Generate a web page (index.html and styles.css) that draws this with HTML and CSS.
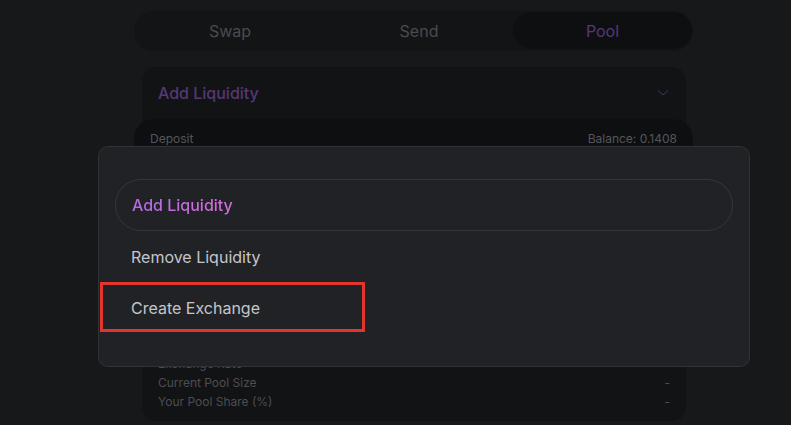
FILE: index.html
```html
<!DOCTYPE html>
<html lang="en">
<head>
<meta charset="utf-8">
<title>Pool</title>
<link rel="stylesheet" href="styles.css">
</head>
<body>
<div class="page">
  <div class="column">
    <nav class="tabs">
      <div class="tab">Swap</div>
      <div class="tab">Send</div>
      <div class="tab tab-active">Pool</div>
    </nav>
    <section class="card">
      <header class="card-head">
        <span class="card-title">Add Liquidity</span>
        <svg class="chevron" width="12" height="8" viewBox="0 0 12 8"><path d="M1 1.5 L6 6 L11 1.5" fill="none" stroke="currentColor" stroke-width="1"/></svg>
      </header>
      <div class="deposit">
        <div class="deposit-row">
          <span>Deposit</span>
          <span>Balance: 0.1408</span>
        </div>
      </div>
      <div class="stats">
        <div class="stat"><span>Exchange Rate</span><span>-</span></div>
        <div class="stat"><span>Current Pool Size</span><span>-</span></div>
        <div class="stat"><span>Your Pool Share (%)</span><span>-</span></div>
      </div>
    </section>
  </div>

  <div class="modal">
    <div class="option option-active"><span class="grad">Add Liquidity</span></div>
    <div class="option">Remove Liquidity</div>
    <div class="option">Create Exchange</div>
    <div class="highlight"></div>
  </div>
</div>
</body>
</html>
```
FILE: styles.css
```css
* { box-sizing: border-box; }
html, body { margin: 0; padding: 0; }
body {
  background: #17181a;
  font-family: Inter, "Noto Sans", sans-serif;
  width: 791px;
  height: 425px;
  overflow: hidden;
}
.page {
  position: relative;
  width: 791px;
  height: 425px;
}
.column {
  margin-left: 134px;
  width: 559px;
  padding-top: 11px;
  display: flex;
  flex-direction: column;
}
.tabs {
  display: grid;
  grid-template-columns: 190px 188px 1fr;
  height: 40px;
  background: #131416;
  border-radius: 20px;
  padding: 1px 1px 2px 1px;
}
.tab {
  display: flex;
  align-items: center;
  justify-content: center;
  font-size: 16px;
  color: #4a4b4f;
  border-radius: 19px;
}
.tab-active {
  background: #0e0f11;
  color: #553973;
}
.card {
  margin: 16px 7px 0 8px;
  background: #121315;
  border-radius: 14px;
  padding-bottom: 10px;
}
.card-head {
  height: 52px;
  display: flex;
  align-items: center;
  justify-content: space-between;
  padding: 0 17px 0 16px;
}
.card-title {
  font-size: 16px;
  font-weight: 500;
  color: #553875;
}
.chevron { color: #4a3262; }
.deposit {
  margin: 0 -7px 0 -8px;
  background: #0e0f11;
  border-radius: 20px;
  height: 228px;
  padding: 12px 16px;
}
.deposit-row {
  display: flex;
  justify-content: space-between;
  font-size: 12px;
  line-height: 16px;
  color: #55565b;
}
.stats {
  padding: 7px 16px 0 16px;
}
.stat {
  display: flex;
  justify-content: space-between;
  font-size: 12px;
  line-height: 19px;
  color: #4d4e53;
}
.modal {
  position: absolute;
  left: 98px;
  top: 146px;
  width: 652px;
  height: 221px;
  background: #212226;
  border: 1px solid #303236;
  border-radius: 10px;
  padding: 32px 16px 0 16px;
  display: flex;
  flex-direction: column;
}
.option {
  height: 51px;
  display: flex;
  align-items: center;
  padding-left: 16px;
  font-size: 16px;
  color: #c4c6cb;
}
.option-active {
  height: 52px;
  border: 1px solid #34363a;
  border-radius: 26px;
}
.grad {
  font-weight: 500;
  background: linear-gradient(90deg, #b56be6, #d66ed8);
  -webkit-background-clip: text;
  background-clip: text;
  color: transparent;
}
.highlight {
  position: absolute;
  left: 1px;
  top: 135px;
  width: 265px;
  height: 50px;
  border: 3px solid #e2352c;
}
```
